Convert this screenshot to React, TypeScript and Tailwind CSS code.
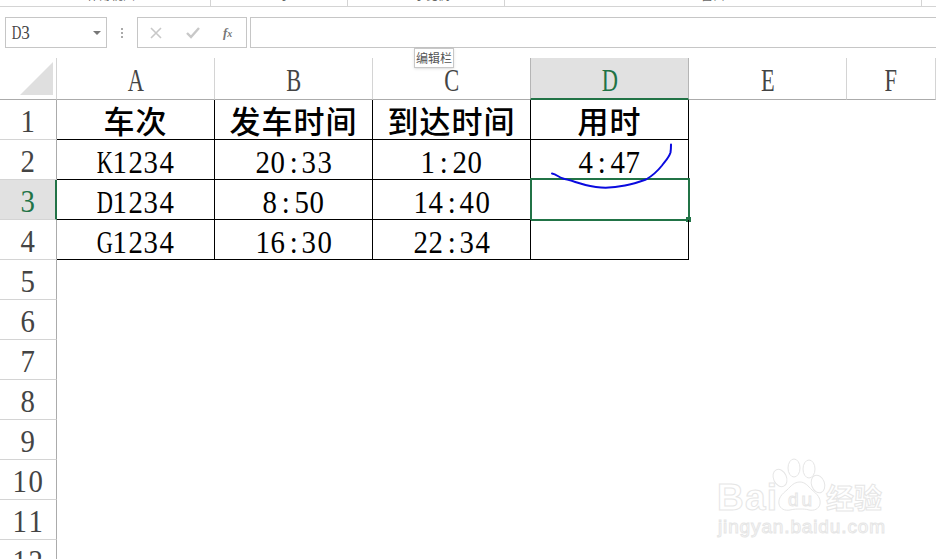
import React from 'react';

const SERIF = "font-['Liberation_Serif','Noto_Sans_CJK_SC',serif]";
const CJK = "font-['Noto_Sans_CJK_SC','Liberation_Sans',sans-serif]";

const rows = [
  ['车次', '发车时间', '到达时间', '用时'],
  ['K1234', '20:33', '1:20', '4:47'],
  ['D1234', '8:50', '14:40', ''],
  ['G1234', '16:30', '22:34', ''],
];

// half-width glyphs, every char sits in a fixed slot like SimSun
const HalfText = ({ text, slot = 'w-[15.6px]' }: { text: string; slot?: string }) => (
  <span className={`inline-flex ${SERIF}`}>
    {text.split('').map((ch, i) => (
      <span
        key={i}
        className={`flex justify-center ${slot} ${/[A-Z]/.test(ch) ? 'scale-x-[0.7]' : 'scale-x-[0.9]'}`}
      >
        {ch}
      </span>
    ))}
  </span>
);

const RibbonGroup = ({ label, width }: { label: string; width: string }) => (
  <div className={`${width} h-[6px] overflow-hidden border-r border-[#d4d4d4] flex justify-center`}>
    <span className={`${CJK} text-[12px] leading-[12px] text-[#666] -mt-[11px]`}>{label}</span>
  </div>
);

const ColHeader = ({ label, active }: { label: string; active?: boolean }) => (
  <div
    className={`flex items-center justify-center h-[42px] pt-[3px] text-[32px] leading-none ${
      active
        ? 'bg-[#e1e1e1] text-[#217346] border-r border-l border-[#b5b5b5] border-b-2 border-b-[#217346] -ml-px'
        : 'text-[#444] border-r border-[#d4d4d4] border-b border-b-[#ababab]'
    }`}
  >
    <HalfText text={label} />
  </div>
);

const RowHeader = ({ n, active }: { n: number; active?: boolean }) => (
  <div
    className={`flex items-center justify-center h-[40px] pt-[3px] text-[32px] leading-none border-b border-b-[#d4d4d4] ${
      active
        ? 'bg-[#e1e1e1] text-[#217346] border-r-2 border-r-[#217346]'
        : 'text-[#444] border-r border-r-[#ababab]'
    }`}
  >
    <HalfText text={String(n)} />
  </div>
);

const Watermark = () => (
  <svg
    className="absolute left-[700px] top-[440px]"
    width="236"
    height="119"
    viewBox="0 0 236 119"
    fill="#fff"
    stroke="#e6e6e6"
    strokeWidth="1"
  >
    <ellipse cx="80" cy="38" rx="6.5" ry="9" transform="rotate(-25 80 38)" />
    <ellipse cx="94" cy="28" rx="6" ry="9" />
    <ellipse cx="109" cy="29" rx="6" ry="9" />
    <ellipse cx="118" cy="44" rx="6.5" ry="9" transform="rotate(-20 118 44)" />
    <path d="M100 42c5 0 8 4 12 8 5 4 9 8 8 14-1 5-6 7-11 6-3-1-6-1-9-1s-6 0-10 1c-5 1-10-1-11-6-1-6 3-10 8-14 4-4 7-8 13-8z" />
    <text x="17" y="70" fontFamily="Liberation Sans" fontWeight="700" fontSize="37" textLength="60">Bai</text>
    <text x="88" y="66" fontFamily="Liberation Sans" fontSize="19" textLength="24">du</text>
    <text x="126" y="69" fontFamily="Noto Sans CJK SC" fontSize="28" fontWeight="700">经验</text>
    <text x="18" y="93" fontFamily="Liberation Sans" fontSize="19" textLength="167">jingyan.baidu.com</text>
  </svg>
);

export default function App() {
  return (
    <div className="relative w-[936px] h-[559px] overflow-hidden bg-white">
      {/* ribbon bottom edge, cut off by the crop */}
      <div className="flex h-[7px] border-b border-[#d4d4d4]">
        <RibbonGroup label="工作簿视图" width="w-[211px]" />
        <RibbonGroup label="显示" width="w-[137px]" />
        <RibbonGroup label="显示比例" width="w-[157px]" />
        <RibbonGroup label="窗口" width="w-[417px]" />
      </div>

      {/* formula bar */}
      <div className="flex items-stretch h-[31px] mt-[10px]">
        <div className="ml-[5px] w-[102px] border border-[#c6c6c6] flex items-center justify-between pl-[6px] pr-[5px]">
          <span className="text-[19px] leading-none text-[#444]">
            <HalfText text="D3" slot="w-[9px]" />
          </span>
          <span className="w-0 h-0 border-x-[4px] border-x-transparent border-t-[4px] border-t-[#777]" />
        </div>
        <div className="w-[30px] flex flex-col items-center justify-center gap-[2px]">
          <span className="w-[2px] h-[2px] bg-[#aaa]" />
          <span className="w-[2px] h-[2px] bg-[#aaa]" />
          <span className="w-[2px] h-[2px] bg-[#aaa]" />
        </div>
        <div className="w-[110px] border border-[#c6c6c6] flex items-center">
          <svg className="ml-[12px]" width="12" height="12" viewBox="0 0 12 12" stroke="#c8c8c8" strokeWidth="1.6" fill="none">
            <path d="M1 1l10 10M11 1L1 11" />
          </svg>
          <svg className="ml-[24px]" width="14" height="12" viewBox="0 0 14 12" stroke="#c8c8c8" strokeWidth="2.4" fill="none">
            <path d="M1 6l4 4 8-9" />
          </svg>
          <span className={`ml-[23px] text-[13px] leading-none italic font-bold text-[#777] ${SERIF}`}>
            f<span className="text-[10px]">x</span>
          </span>
        </div>
        <div className="flex-1 ml-[3px] border border-r-0 border-[#c6c6c6]" />
      </div>

      {/* sheet */}
      <div className="mt-[10px] grid grid-cols-[57px_158px_158px_158px_158px_158px_1fr]">
        <div className="relative h-[42px] border-r border-[#d4d4d4] border-b border-b-[#ababab]">
          <div className="absolute left-[20px] top-[4px] w-0 h-0 border-l-[33px] border-l-transparent border-b-[33px] border-b-[#dfdfdf]" />
        </div>
        <ColHeader label="A" />
        <ColHeader label="B" />
        <ColHeader label="C" />
        <ColHeader label="D" active />
        <ColHeader label="E" />
        <ColHeader label="F" />

        {Array.from({ length: 12 }).map((_, r) => (
          <React.Fragment key={r}>
            <RowHeader n={r + 1} active={r === 2} />
            {[0, 1, 2, 3].map((c) => {
              const cell = rows[r]?.[c];
              if (r > 3) return <div key={c} className="h-[40px]" />;
              return (
                <div
                  key={c}
                  className="relative h-[40px] flex items-center justify-center border-r border-b border-black text-[32px] leading-none text-black"
                >
                  {r === 0 ? (
                    <span className={`${CJK} font-medium text-[31px] tracking-[1px]`}>{cell}</span>
                  ) : (
                    <span className="pt-[3px]">
                      <HalfText text={cell} />
                    </span>
                  )}
                  {r === 2 && c === 3 && (
                    <div className="absolute -left-px -top-[2px] w-[160px] h-[43px] border-2 border-[#217346]">
                      <span className="absolute -right-[3px] -bottom-[3px] w-[5px] h-[5px] bg-[#217346]" />
                    </div>
                  )}
                </div>
              );
            })}
            <div className="h-[40px]" />
            <div className="h-[40px]" />
          </React.Fragment>
        ))}
      </div>

      {/* tooltip */}
      <div className={`absolute left-[414px] top-[48px] w-[40px] h-[20px] bg-white border border-[#c8c8c8] shadow-sm flex items-center justify-center text-[12px] text-[#555] ${CJK}`}>
        编辑栏
      </div>

      {/* hand drawn mark */}
      <svg className="absolute left-0 top-0" width="936" height="559" fill="none">
        <path
          d="M552 173.500c5 1 6 3.500 11 5 3 1 7 1.500 11 3 8 2.500 16 5.500 27 6 9 .5 17-.5 24-2 8-1.500 14-3.500 21-6 7-4 12-9 16-14 3-4 7-8 8.500-13 .5-3 .5-5 .5-8"
          stroke="#0a0adf"
          strokeWidth="2"
          strokeLinecap="round"
        />
      </svg>

      <Watermark />
    </div>
  );
}
